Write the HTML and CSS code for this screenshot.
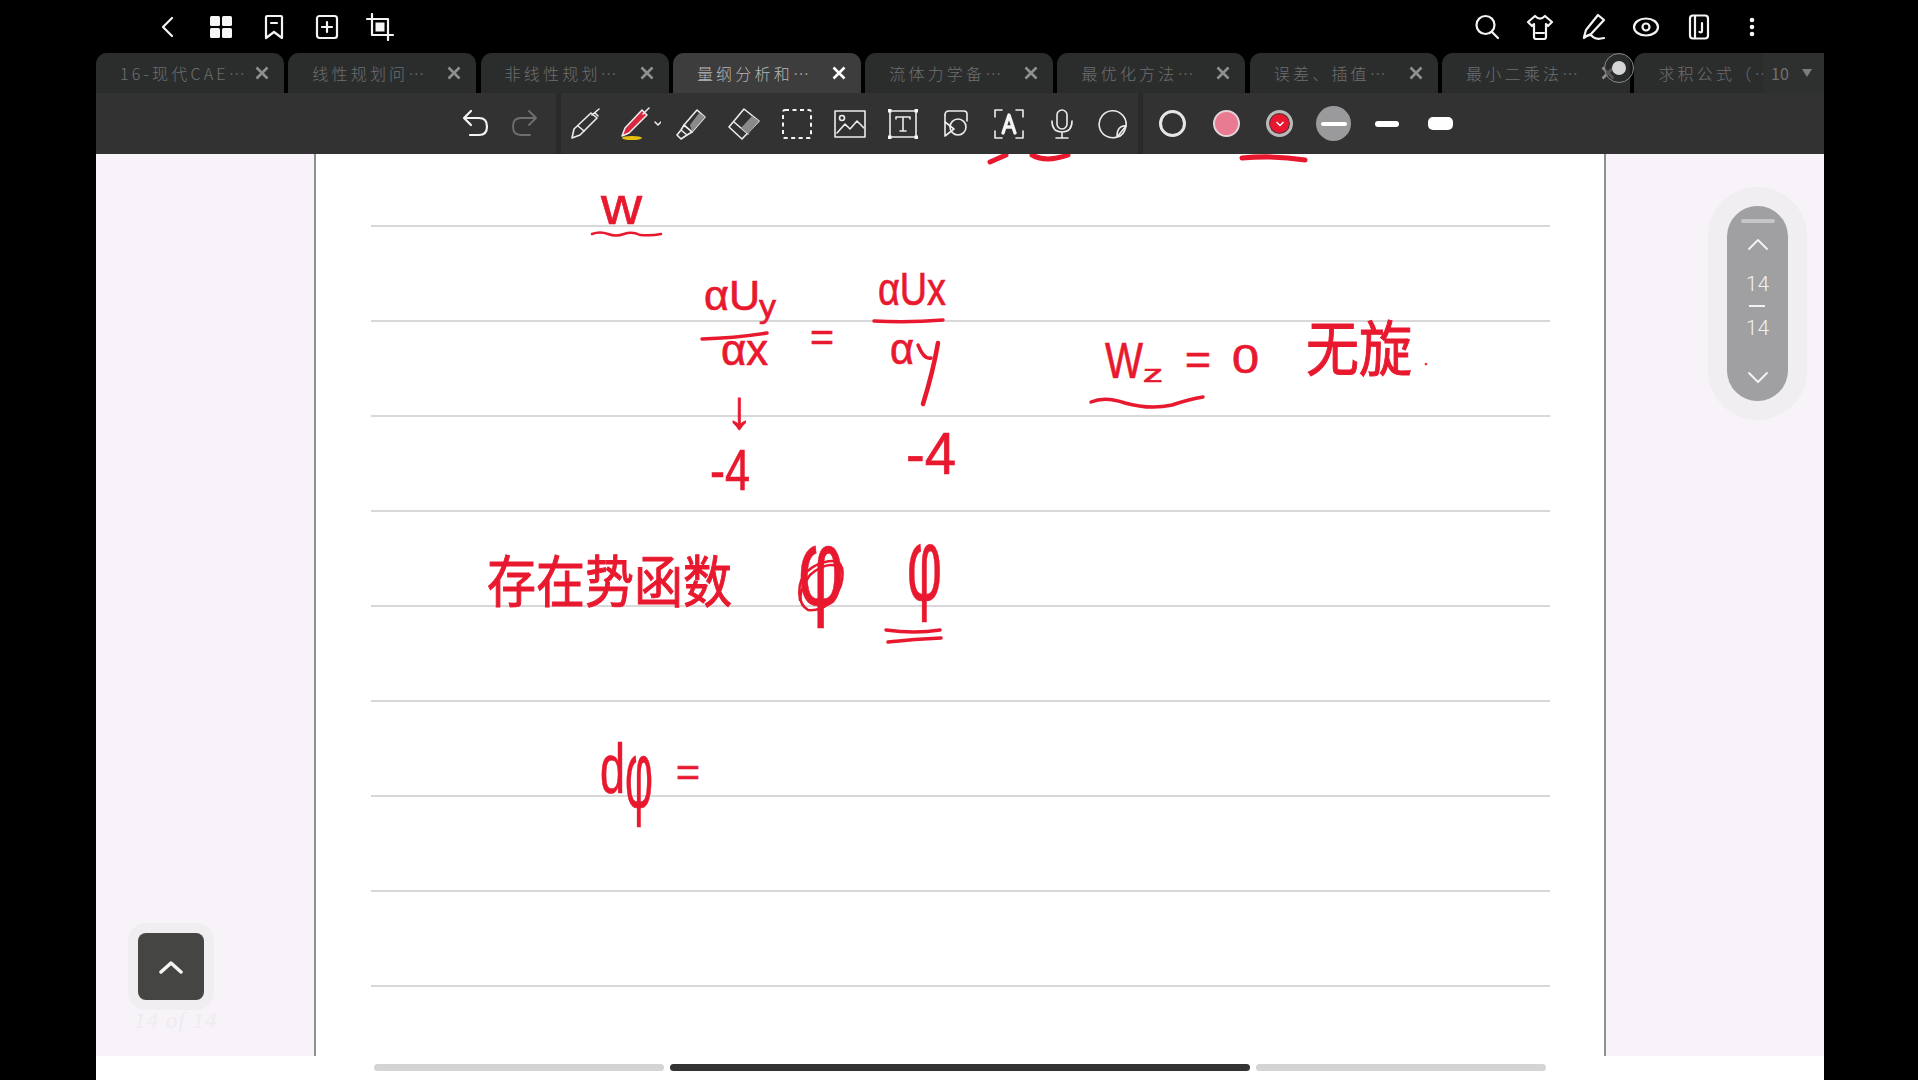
FILE: index.html
```html
<!DOCTYPE html>
<html lang="zh">
<head>
<meta charset="utf-8">
<title>Notes</title>
<link rel="stylesheet" href="styles.css">
</head>
<body>
<div class="app">
  <header class="topbar">
    <div class="icon-group">
      <span class="top-cell back"><svg class="ico" width="24" height="28" viewBox="0 0 24 28"><path d="M17 5 L8 14 L17 23"/></svg></span>
      <span class="top-cell"><svg width="24" height="24" viewBox="0 0 24 24"><rect class="fill" x="1" y="1" width="10" height="10" rx="1.5"/><rect class="fill" x="13" y="1" width="10" height="10" rx="1.5"/><rect class="fill" x="1" y="13" width="10" height="10" rx="1.5"/><rect class="fill" x="13" y="13" width="10" height="10" rx="1.5"/></svg></span>
      <span class="top-cell"><svg class="ico" width="24" height="26" viewBox="0 0 24 26"><path d="M4 3 Q4 2 5 2 H19 Q20 2 20 3 V24 L12 18 L4 24 Z"/><path d="M9 9 H15"/></svg></span>
      <span class="top-cell"><svg class="ico" width="24" height="26" viewBox="0 0 24 26"><rect x="2" y="2" width="20" height="22" rx="2.5"/><path d="M12 8 V18 M7 13 H17"/></svg></span>
      <span class="top-cell"><svg class="ico" width="28" height="28" viewBox="0 0 28 28"><path d="M6 1 V22 H27 M1 6 H22 V27"/><rect class="fill" x="9.5" y="9.5" width="9" height="9"/></svg></span>
    </div>
    <div class="icon-group">
      <span class="top-cell"><svg class="ico" width="26" height="26" viewBox="0 0 26 26"><circle cx="11.500" cy="11" r="9"/><path d="M18 18 L24 24"/></svg></span>
      <span class="top-cell"><svg class="ico" width="28" height="26" viewBox="0 0 28 26"><path d="M9 2 Q14 7 19 2 L26 8 L22 12 L20 10 V23 Q20 25 18 25 H10 Q8 25 8 23 V10 L6 12 L2 8 Z"/><path d="M10 19 H18"/></svg></span>
      <span class="top-cell"><svg class="ico" width="28" height="28" viewBox="0 0 28 28"><path d="M19 2 L25 7 L12 21 L5 24 L7 17 Z"/><path d="M5 25 Q11 20 14 24 Q17 27 25 25"/></svg></span>
      <span class="top-cell"><svg class="ico" width="28" height="20" viewBox="0 0 28 20"><ellipse cx="14" cy="10" rx="12" ry="8.500"/><circle cx="14" cy="10" r="3.500"/></svg></span>
      <span class="top-cell"><svg class="ico" width="22" height="26" viewBox="0 0 22 26"><rect x="2" y="1.500" width="18" height="23" rx="3"/><path d="M7 2 V24"/><path d="M14 9 V17 Q14 19 11.500 18"/></svg></span>
      <span class="top-cell"><svg width="6" height="20" viewBox="0 0 6 20"><circle class="fill" cx="3" cy="3" r="2.300"/><circle class="fill" cx="3" cy="10" r="2.300"/><circle class="fill" cx="3" cy="17" r="2.300"/></svg></span>
    </div>
  </header>

  <nav class="tabs">
    <div class="tab"><span class="tab-title">16-现代CAE…</span><svg class="tab-x" width="14" height="14" viewBox="0 0 14 14"><path d="M1.500 1.500 L12.500 12.500 M12.500 1.500 L1.500 12.500"/></svg></div>
    <div class="tab"><span class="tab-title">线性规划问…</span><svg class="tab-x" width="14" height="14" viewBox="0 0 14 14"><path d="M1.500 1.500 L12.500 12.500 M12.500 1.500 L1.500 12.500"/></svg></div>
    <div class="tab"><span class="tab-title">非线性规划…</span><svg class="tab-x" width="14" height="14" viewBox="0 0 14 14"><path d="M1.500 1.500 L12.500 12.500 M12.500 1.500 L1.500 12.500"/></svg></div>
    <div class="tab tab-active"><span class="tab-title">量纲分析和…</span><svg class="tab-x" width="14" height="14" viewBox="0 0 14 14"><path d="M1.500 1.500 L12.500 12.500 M12.500 1.500 L1.500 12.500"/></svg></div>
    <div class="tab"><span class="tab-title">流体力学备…</span><svg class="tab-x" width="14" height="14" viewBox="0 0 14 14"><path d="M1.500 1.500 L12.500 12.500 M12.500 1.500 L1.500 12.500"/></svg></div>
    <div class="tab"><span class="tab-title">最优化方法…</span><svg class="tab-x" width="14" height="14" viewBox="0 0 14 14"><path d="M1.500 1.500 L12.500 12.500 M12.500 1.500 L1.500 12.500"/></svg></div>
    <div class="tab"><span class="tab-title">误差、插值…</span><svg class="tab-x" width="14" height="14" viewBox="0 0 14 14"><path d="M1.500 1.500 L12.500 12.500 M12.500 1.500 L1.500 12.500"/></svg></div>
    <div class="tab"><span class="tab-title">最小二乘法…</span><svg class="tab-x" width="14" height="14" viewBox="0 0 14 14"><path d="M1.500 1.500 L12.500 12.500 M12.500 1.500 L1.500 12.500"/></svg></div>
    <div class="tab"><span class="tab-title">求积公式（…</span></div>
    <div class="tab-count"><span>10</span><svg width="10" height="8" viewBox="0 0 10 8"><path class="dim-fill" d="M0 0 H10 L5 8 Z"/></svg></div>
  </nav>

  <div class="record"><span class="record-dot"></span></div>

  <div class="toolbar">
    <div class="tool-group history">
      <span class="tool-cell"><svg class="ico" width="32" height="30" viewBox="0 0 32 30"><path d="M6 9 H20 Q28 9 28 17.500 Q28 26 20 26 H11"/><path d="M12 2 L5 9 L12 16"/></svg></span>
      <span class="tool-cell"><svg class="ico muted" width="32" height="30" viewBox="0 0 32 30"><path d="M26 9 H12 Q4 9 4 17.500 Q4 26 12 26 H21"/><path d="M20 2 L27 9 L20 16"/></svg></span>
    </div>
    <span class="divider"></span>
    <div class="tool-group tools">
      <span class="tool-cell"><svg class="ico thin" width="32" height="32" viewBox="0 0 32 32"><path d="M2 30 L4 21 L21 5 L27 10 L10 27 Z"/><path d="M8 18 L14 23"/><path d="M22 7 L29 1 M25 5 L28 8"/></svg></span>
      <span class="tool-cell pen-cell"><svg width="42" height="34" viewBox="0 0 42 34"><path class="pen-red" d="M3 29 L6 21 L23 3 L28 8 L10 26 Z"/><path class="thin-line" d="M3 29 L6 21 L23 3 L28 8 L10 26 Z M24 7 L30 1"/><ellipse class="pen-gold" cx="13" cy="31" rx="10" ry="2"/><path class="thin-line" d="M36 15 L39 18 L42 15"/></svg></span>
      <span class="tool-cell"><svg class="ico thin" width="32" height="32" viewBox="0 0 32 32"><path d="M9 17 L22 2 L30 9 L17 24 Z"/><path class="grey-fill" d="M15 17 L24 5 L30 9 L17 24 Z"/><path d="M9 17 L17 24 L12 27 L6 22 Z M6 22 L2 27 L6 31 L12 27"/></svg></span>
      <span class="tool-cell"><svg class="ico thin" width="34" height="32" viewBox="0 0 34 32"><path d="M17 1 L32 13 L15 31 L2 19 Z"/><path d="M7 14 L21 26"/><path class="grey-fill" d="M21 26 L32 13 L25 8 L14 20 Z"/></svg></span>
      <span class="tool-cell"><svg class="ico dash" width="32" height="32" viewBox="0 0 32 32"><rect x="2" y="2" width="28" height="28" rx="2"/></svg></span>
      <span class="tool-cell"><svg class="ico thin" width="32" height="28" viewBox="0 0 32 28"><rect x="1" y="1" width="30" height="26"/><circle cx="8" cy="8" r="2.500"/><path d="M3 23 L11 14 L16 19 L23 11 L30 18"/></svg></span>
      <span class="tool-cell"><svg class="ico thin" width="30" height="30" viewBox="0 0 30 30"><rect x="2" y="2" width="26" height="26"/><path d="M8 10 V8 H22 V10 M15 8 V22 M12 22 H18"/><rect class="fill" x="0" y="0" width="3.500" height="3.500"/><rect class="fill" x="26.500" y="0" width="3.500" height="3.500"/><rect class="fill" x="0" y="26.500" width="3.500" height="3.500"/><rect class="fill" x="26.500" y="26.500" width="3.500" height="3.500"/></svg></span>
      <span class="tool-cell"><svg class="ico thin" width="26" height="28" viewBox="0 0 26 28"><path d="M2 5 Q2 1 6 1 H21 Q24 1 24 4 V11"/><path d="M2 5 V12"/><circle cx="15" cy="17" r="8"/><path d="M2 12 L11 19 L2 26 Z"/></svg></span>
      <span class="tool-cell"><svg class="ico thin" width="32" height="32" viewBox="0 0 32 32"><path d="M2 9 V2 H9 M23 2 H30 V9 M2 23 V30 H9 M23 30 H30 V23"/><path class="ocr" d="M10 25 L16 7 L22 25 M12 19 H20"/></svg></span>
      <span class="tool-cell"><svg class="ico thin" width="22" height="30" viewBox="0 0 22 30"><rect x="6" y="1" width="10" height="19" rx="5"/><path d="M1 12 Q1 23 11 23 Q21 23 21 12 M11 23 V29 M5 29 H17"/></svg></span>
      <span class="tool-cell sticker"><svg class="ico thin" width="30" height="30" viewBox="0 0 30 30"><path d="M19 28 A13.500 13.500 0 1 1 28 17 Z"/><path d="M28 17 Q19 16 19 28 Q26 27 28 17"/></svg></span>
    </div>
    <span class="divider"></span>
    <div class="tool-group swatches">
      <span class="swatch-cell"><span class="swatch swatch-empty"></span></span>
      <span class="swatch-cell"><span class="swatch swatch-pink"></span></span>
      <span class="swatch-cell"><span class="swatch swatch-red"><svg width="10" height="8" viewBox="0 0 10 8"><path class="chev" d="M1.500 2 L5 5.500 L8.500 2"/></svg></span></span>
      <span class="swatch-cell"><span class="swatch-grey"><span class="width-bar bar-thin"></span></span></span>
      <span class="swatch-cell"><span class="width-bar bar-mid"></span></span>
      <span class="swatch-cell"><span class="width-bar bar-thick"></span></span>
    </div>
  </div>

  <main class="canvas">
    <div class="side"></div>
    <div class="paper">
      <div class="rule"></div><div class="rule"></div><div class="rule"></div>
      <div class="rule"></div><div class="rule"></div><div class="rule"></div>
      <div class="rule"></div><div class="rule"></div><div class="rule"></div>
    </div>
    <div class="side"></div>

    <svg class="ink" width="1728" height="902" viewBox="96 154 1728 902">
      <path class="stroke s5" d="M990 162 L1006 155 M1032 155 Q1046 163 1068 155"/>
      <path class="stroke s5" d="M1242 158 Q1274 155 1305 160"/>

      <text class="hand" x="601" y="224" font-size="54" textLength="41" lengthAdjust="spacingAndGlyphs">w</text>
      <path class="stroke s2" d="M592 234 Q600 231 608 234 T624 234 T640 235 Q652 236 661 234"/>

      <text class="hand" y="310" font-size="42"><tspan x="704" textLength="56" lengthAdjust="spacingAndGlyphs">αU</tspan><tspan x="759" y="317" font-size="32" textLength="17" lengthAdjust="spacingAndGlyphs">y</tspan></text>
      <path class="stroke s3" d="M702 339 Q735 338 767 333"/>
      <text class="hand" x="721" y="365" font-size="44" textLength="47" lengthAdjust="spacingAndGlyphs">αx</text>

      <text class="hand" x="810" y="351" font-size="40" textLength="24" lengthAdjust="spacingAndGlyphs">=</text>

      <text class="hand" x="878" y="305" font-size="46" textLength="68" lengthAdjust="spacingAndGlyphs">αUx</text>
      <path class="stroke s3" d="M874 321 Q908 323 943 320"/>
      <text class="hand" x="890" y="364" font-size="44" textLength="24" lengthAdjust="spacingAndGlyphs">α</text>
      <path class="stroke s3" d="M918 345 Q924 360 931 358"/>
      <path class="stroke s4" d="M938 343 Q933 372 923 404"/>

      <text class="hand" x="726" y="428" font-size="54">↓</text>
      <text class="hand" x="710" y="490" font-size="58" textLength="40" lengthAdjust="spacingAndGlyphs">-4</text>
      <text class="hand" x="906" y="474" font-size="60" textLength="50" lengthAdjust="spacingAndGlyphs">-4</text>

      <text class="hand" y="378" font-size="50"><tspan x="1105" textLength="38" lengthAdjust="spacingAndGlyphs">W</tspan><tspan x="1143" y="382" font-size="24" textLength="20" lengthAdjust="spacingAndGlyphs">z</tspan></text>
      <text class="hand" x="1185" y="374" font-size="42" textLength="26" lengthAdjust="spacingAndGlyphs">=</text>
      <text class="hand" x="1232" y="373" font-size="40" textLength="27" lengthAdjust="spacingAndGlyphs">0</text>
      <text class="hand-cjk" x="1306" y="371" font-size="60" textLength="106" lengthAdjust="spacingAndGlyphs">无旋</text>
      <text class="hand" x="1424" y="365" font-size="14">.</text>
      <path class="stroke s3" d="M1091 402 Q1105 396 1125 403 Q1150 410 1172 405 Q1190 399 1203 397"/>

      <text class="hand-cjk" x="487" y="602" font-size="56" textLength="245" lengthAdjust="spacingAndGlyphs">存在势函数</text>

      <text class="hand" x="798" y="605" font-size="110" textLength="46" lengthAdjust="spacingAndGlyphs">φ</text>
      <path class="stroke s2" d="M800 600 Q795 570 825 562 Q848 556 841 585 Q830 612 808 610 Q792 600 810 575 Q830 558 842 570 Q846 590 820 606"/>
      <text class="hand" x="907" y="600" font-size="103" textLength="35" lengthAdjust="spacingAndGlyphs">φ</text>
      <path class="stroke s3" d="M886 630 Q915 634 940 630 M888 642 Q915 639 941 638"/>

      <text class="hand" y="793" font-size="70"><tspan x="600" textLength="25" lengthAdjust="spacingAndGlyphs">d</tspan><tspan x="625" y="807" font-size="95" textLength="28" lengthAdjust="spacingAndGlyphs">φ</tspan><tspan x="676" y="786" font-size="38" textLength="24" lengthAdjust="spacingAndGlyphs">=</tspan></text>
    </svg>

    <div class="to-top">
      <svg class="ico top-chev" width="24" height="14" viewBox="0 0 24 14"><path d="M2 12 L12 3 L22 12"/></svg>
    </div>
    <span class="to-top-label">14 of 14</span>

    <aside class="pager">
      <span class="pager-handle"></span>
      <svg class="ico pager-chev" width="22" height="14" viewBox="0 0 22 14"><path d="M2 12 L11 3 L20 12"/></svg>
      <div class="pager-count">
        <span>14</span>
        <span class="pager-line"></span>
        <span>14</span>
      </div>
      <svg class="ico pager-chev" width="22" height="14" viewBox="0 0 22 14"><path d="M2 2 L11 11 L20 2"/></svg>
    </aside>
  </main>

  <footer class="pagebar">
    <span class="seg seg-side"></span>
    <span class="seg seg-main"></span>
    <span class="seg seg-side"></span>
  </footer>
</div>
</body>
</html>
```

FILE: styles.css
```css
* { box-sizing: border-box; }
html, body { margin: 0; padding: 0; background: #000; }
body { width: 1918px; height: 1080px; overflow: hidden; font-family: "Noto Sans CJK SC", "Liberation Sans", sans-serif; }

.app { position: relative; margin-left: 96px; width: 1728px; height: 1080px; display: flex; flex-direction: column; }

/* shared svg strokes */
.ico { fill: none; stroke: #f4f4f4; stroke-width: 2.2; stroke-linecap: round; stroke-linejoin: round; }
.ico.thin { stroke-width: 1.6; stroke: #ececec; }
.ico.muted { stroke: #6f6f6f; stroke-width: 1.8; }
.ico.dash { stroke-width: 2; stroke-dasharray: 4 3.5; stroke-linecap: butt; }
.fill { fill: #f6f6f6; stroke: none; }
.grey-fill { fill: #8a8a8c; stroke: none; }
.thin-line { fill: none; stroke: #efefef; stroke-width: 1.500; stroke-linejoin: round; stroke-linecap: round; }
.pen-red { fill: #d8283f; }
.pen-gold { fill: #e8c010; }
.ocr { stroke-width: 3.4; stroke: #f4f4f4; }
.dim-fill { fill: #7d7d7d; }

/* top bar */
.topbar { height: 53px; padding: 0 46px 0 43px; display: flex; justify-content: space-between; align-items: center; background: #000; }
.icon-group { display: flex; align-items: center; }
.top-cell { width: 53px; height: 53px; display: flex; align-items: center; justify-content: center; }
.top-cell.back { width: 55px; }

/* tabs */
.tabs { position: relative; height: 40px; display: flex; gap: 4.300px; overflow: hidden; background: #000; }
.tab { flex: 0 0 188px; height: 40px; padding: 0 15px 0 24px; border-radius: 11px 11px 0 0; background: #2b2d2d; display: flex; align-items: center; justify-content: space-between; }
.tab-title { font-size: 16px; letter-spacing: 3.200px; color: #6e6f6f; white-space: nowrap; font-weight: 300; }
.tab-x { fill: none; stroke: #8f8f8f; stroke-width: 2.600; flex: none; }
.tab-active { background: #3d3d3d; }
.tab-active .tab-title { color: #b5b5b5; }
.tab-active .tab-x { stroke: #fff; }
.tab-count { position: absolute; right: 0; top: 0; width: 61px; height: 40px; padding: 0 12px 0 8px; background: #2e2f2f; display: flex; align-items: center; justify-content: space-between; color: #6e6f6f; font-size: 16px; }

.record { position: absolute; left: 1508px; top: 53px; width: 30px; height: 30px; border-radius: 50%; border: 1.500px solid #8a8a8a; background: rgba(40, 40, 40, .55); display: flex; align-items: center; justify-content: center; }
.record-dot { width: 14px; height: 14px; border-radius: 50%; background: #d6d6d6; }

/* toolbar */
.toolbar { height: 61px; padding-left: 354px; display: flex; align-items: center; background: #323232; }
.tool-group { display: flex; align-items: center; height: 100%; }
.history { margin-right: 6px; }
.tool-cell { width: 50px; height: 100%; display: flex; align-items: center; justify-content: center; }
.tools .tool-cell { width: 53px; }
.tools .tool-cell:first-child { width: 50px; }
.tools .pen-cell { position: relative; left: 2px; }
.tools .sticker { width: 50px; }
.divider { width: 5px; height: 100%; background: #2a2a2a; flex: none; }
.swatches { padding-left: 3px; }
.swatch-cell { width: 53.600px; height: 100%; display: flex; align-items: center; justify-content: center; }
.swatch { width: 27px; height: 27px; border-radius: 50%; display: flex; align-items: center; justify-content: center; }
.swatch-empty { border: 3px solid #e6e6e6; }
.swatch-pink { background: #e87a92; border: 2px solid #e4d4d8; }
.swatch-red { background: #e8172f; border: 3px solid #b9b9b9; box-shadow: inset 0 0 0 1px #3a3a3a; }
.chev { fill: none; stroke: #fff; stroke-width: 1.500; }
.swatch-grey { width: 35px; height: 35px; border-radius: 50%; background: #9a999c; display: flex; align-items: center; justify-content: center; }
.width-bar { display: block; background: #fff; }
.bar-thin { width: 26px; height: 4px; border-radius: 2px; }
.bar-mid { width: 24px; height: 6px; border-radius: 3px; }
.bar-thick { width: 25px; height: 13px; border-radius: 5px; }

/* canvas */
.canvas { position: relative; height: 902px; display: flex; background: #f7f3f8; overflow: hidden; }
.side { flex: 0 0 218px; }
.paper { flex: 1; background: #fff; border-left: 2px solid #8f8f8f; border-right: 2px solid #8f8f8f; padding: 0 54px 0 55px; }
.rule { height: 95px; border-bottom: 2px solid #d8d8d8; }
.rule:first-child { height: 73px; }

.ink { position: absolute; left: 0; top: 0; }
.hand { font-family: "Liberation Sans", sans-serif; fill: #e8192f; stroke: #e8192f; stroke-width: .7; }
.hand-cjk { font-family: "Noto Sans CJK SC", sans-serif; fill: #e8192f; stroke: #e8192f; stroke-width: 1; }
.stroke { fill: none; stroke: #e8192f; stroke-linecap: round; stroke-linejoin: round; }
.s2 { stroke-width: 2.500; }
.s3 { stroke-width: 3.500; }
.s4 { stroke-width: 4.500; }
.s5 { stroke-width: 5; }

.to-top { position: absolute; left: 42px; top: 779px; width: 66px; height: 67px; border-radius: 8px; background: #454643; box-shadow: 0 0 0 10px #f0eef1; display: flex; align-items: center; justify-content: center; }
.top-chev { stroke-width: 3.500; }
.to-top-label { position: absolute; left: 38px; top: 854px; width: 90px; font-family: "Liberation Serif", serif; font-style: italic; font-size: 23px; line-height: 26px; letter-spacing: 1px; white-space: nowrap; color: #efecf0; }

.pager { position: absolute; left: 1631px; top: 52px; width: 61px; height: 195px; border-radius: 31px; background: #a09fa2; box-shadow: 0 0 0 19px #f0eef1; padding-top: 13px; display: flex; flex-direction: column; align-items: center; }
.pager-handle { width: 34px; height: 4px; border-radius: 2px; background: #c6c6c8; margin-bottom: 14px; }
.pager-chev { stroke-width: 1.800; }
.pager-count { margin: 21px 0 31px; height: 68px; display: flex; flex-direction: column; align-items: center; justify-content: space-between; color: #f2f2f2; font-family: "Roboto", "Liberation Sans", sans-serif; font-size: 21px; line-height: 24px; font-weight: 300; }
.pager-line { width: 16px; height: 1.500px; background: #f2f2f2; }

/* bottom strip */
.pagebar { flex: 1; background: #fff; padding: 8px 0 0 278px; display: flex; gap: 6px; }
.seg { height: 7px; border-radius: 4px; }
.seg-side { width: 290px; background: #d4d4d4; }
.seg-main { width: 580px; background: #333; }
```
